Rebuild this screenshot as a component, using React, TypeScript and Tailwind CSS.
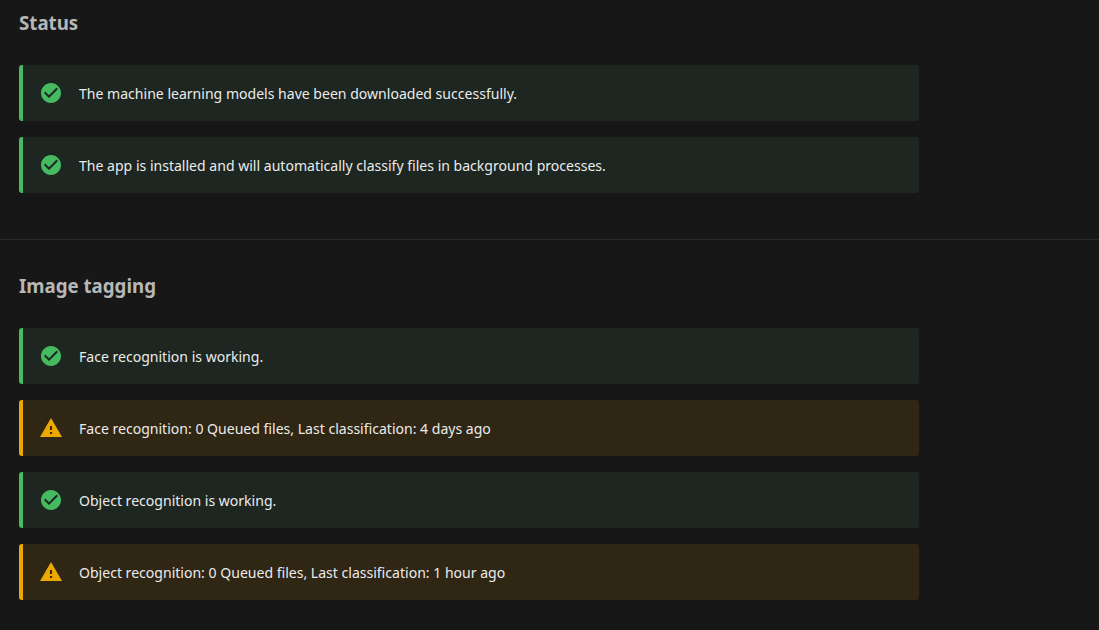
const CHECK = "M12 2C6.5 2 2 6.5 2 12S6.5 22 12 22 22 17.5 22 12 17.5 2 12 2M10 17L5 12L6.41 10.59L10 14.17L17.59 6.58L19 8L10 17Z";
const ALERT = "M13 14H11V10H13M13 18H11V16H13M1 21H23L12 2L1 21Z";

function Note({ kind, text }: { kind: "success" | "warning"; text: string }) {
  const ok = kind === "success";
  return (
    <div className={`flex h-14 w-[900px] items-center gap-4 rounded-[3px] border-l-4 pl-4 ${ok ? "border-[#46ba61] bg-[#1d2620]" : "border-[#eca700] bg-[#302614]"}`}>
      <svg viewBox="0 0 24 24" className={`h-6 w-6 shrink-0 ${ok ? "text-[#46ba61]" : "text-[#eca700]"}`} fill="currentColor">
        <path d={ok ? CHECK : ALERT} />
      </svg>
      <p className="pt-[2px] text-[14.05px] leading-6 text-[#ebebeb]">{text}</p>
    </div>
  );
}

export default function App() {
  return (
    <div className="h-[630px] overflow-hidden bg-[#171717] font-['Noto_Sans',sans-serif]">
      <section className="flex h-[240px] flex-col gap-4 border-b border-[#292929] px-[19px]">
        <h2 className="mb-[10px] h-[39px] pt-[9px] text-[18.7px] leading-[28px] font-bold text-[#b8b8b8]">Status</h2>
        <Note kind="success" text="The machine learning models have been downloaded successfully." />
        <Note kind="success" text="The app is installed and will automatically classify files in background processes." />
      </section>
      <section className="flex flex-col gap-4 px-[19px] pt-[32px]">
        <h2 className="mb-0 h-[40px] text-[18.7px] leading-[28px] font-bold text-[#b8b8b8]">Image tagging</h2>
        <Note kind="success" text="Face recognition is working." />
        <Note kind="warning" text="Face recognition: 0 Queued files, Last classification: 4 days ago" />
        <Note kind="success" text="Object recognition is working." />
        <Note kind="warning" text="Object recognition: 0 Queued files, Last classification: 1 hour ago" />
      </section>
    </div>
  );
}
